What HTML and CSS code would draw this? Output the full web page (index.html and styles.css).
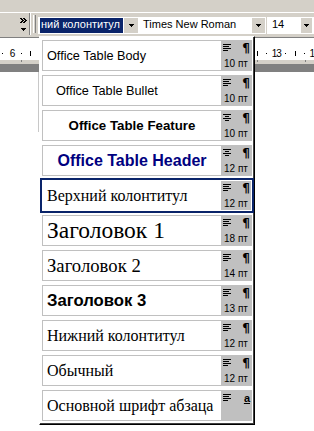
FILE: index.html
```html
<!DOCTYPE html>
<html lang="ru">
<head>
    <meta charset="UTF-8">
    <meta name="viewport" content="width=device-width, initial-scale=1.0">
    <title>Стиль</title>
    <link rel="stylesheet" href="styles.css">
</head>
<body>
    <div class="menubar"></div>

    <div class="toolbar">
        <div class="more">
            <svg class="chev" width="7" height="5" viewBox="0 0 7 5"><path d="M0 0h2v1H0zM3 0h2v1H3zM1 1h2v1H1zM4 1h2v1H4zM2 2h2v1H2zM5 2h2v1H5zM1 3h2v1H1zM4 3h2v1H4zM0 4h2v1H0zM3 4h2v1H3z"/></svg>
            <svg class="arrow" width="5" height="3" viewBox="0 0 5 3"><path d="M0 0h5v1H0zM1 1h3v1H1zM2 2h1v1H2z"/></svg>
        </div>
        <div class="sep"></div>
        <div class="grip"></div>

        <div class="combo combo-style">
            <div class="field selected">ний колонтитул</div>
            <div class="drop"><svg width="5" height="3" viewBox="0 0 5 3"><path d="M0 0h5v1H0zM1 1h3v1H1zM2 2h1v1H2z"/></svg></div>
        </div>
        <div class="combo combo-font">
            <div class="field">Times New Roman</div>
            <div class="drop"><svg width="5" height="3" viewBox="0 0 5 3"><path d="M0 0h5v1H0zM1 1h3v1H1zM2 2h1v1H2z"/></svg></div>
        </div>
        <div class="combo combo-size">
            <div class="field">14</div>
            <div class="drop"><svg width="5" height="3" viewBox="0 0 5 3"><path d="M0 0h5v1H0zM1 1h3v1H1zM2 2h1v1H2z"/></svg></div>
        </div>
    </div>

    <!-- horizontal ruler, 1 cm = 37.8px; numbers under the open list are left out -->
    <div class="ruler">
        <div class="ruler-scale">
            <span class="mk dot"></span>
            <span class="mk num">6</span><span class="mk dot"></span><span class="mk bar"></span><span class="mk dot"></span>
            <span class="mk"></span><span class="mk dot"></span><span class="mk bar"></span><span class="mk dot"></span>
            <span class="mk"></span><span class="mk dot"></span><span class="mk bar"></span><span class="mk dot"></span>
            <span class="mk"></span><span class="mk dot"></span><span class="mk bar"></span><span class="mk dot"></span>
            <span class="mk"></span><span class="mk dot"></span><span class="mk bar"></span><span class="mk dot"></span>
            <span class="mk"></span><span class="mk dot"></span><span class="mk bar"></span><span class="mk dot"></span>
            <span class="mk"></span><span class="mk dot"></span><span class="mk bar"></span><span class="mk dot"></span>
            <span class="mk num">13</span><span class="mk dot"></span><span class="mk bar"></span><span class="mk dot"></span>
            <span class="mk num">14</span>
        </div>
        <div class="ruler-tabs">
            <span></span><span></span><span></span><span></span><span></span><span></span><span></span>
        </div>
        <div class="ruler-edge"></div>
    </div>

    <div class="doc">
        <div class="doc-frame"></div>
    </div>

    <!-- open style list -->
    <div class="style-list">
        <div class="item">
            <div class="name n-body">Office Table Body</div>
            <div class="meta">
                <div class="meta-top"><svg class="align" width="8" height="7" viewBox="0 0 8 7"><path d="M0 0h8v1H0zM0 2h6v1H0zM0 4h8v1H0zM0 6h5v1H0z"/></svg><span class="para">¶</span></div>
                <div class="size">10 пт</div>
            </div>
        </div>
        <div class="item">
            <div class="name n-body n-bullet">Office Table Bullet</div>
            <div class="meta">
                <div class="meta-top"><svg class="align" width="8" height="7" viewBox="0 0 8 7"><path d="M0 0h8v1H0zM0 2h6v1H0zM0 4h8v1H0zM0 6h5v1H0z"/></svg><span class="para">¶</span></div>
                <div class="size">10 пт</div>
            </div>
        </div>
        <div class="item">
            <div class="name n-feature">Office Table Feature</div>
            <div class="meta">
                <div class="meta-top"><svg class="align" width="8" height="7" viewBox="0 0 8 7"><path d="M0 0h8v1H0zM2 2h4v1H2zM0 4h8v1H0zM2 6h4v1H2z"/></svg><span class="para">¶</span></div>
                <div class="size">10 пт</div>
            </div>
        </div>
        <div class="item">
            <div class="name n-header">Office Table Header</div>
            <div class="meta">
                <div class="meta-top"><svg class="align" width="8" height="7" viewBox="0 0 8 7"><path d="M0 0h8v1H0zM2 2h4v1H2zM0 4h8v1H0zM2 6h4v1H2z"/></svg><span class="para">¶</span></div>
                <div class="size">12 пт</div>
            </div>
        </div>
        <div class="item sel">
            <div class="name n-serif">Верхний колонтитул</div>
            <div class="meta">
                <div class="meta-top"><svg class="align" width="8" height="7" viewBox="0 0 8 7"><path d="M0 0h8v1H0zM0 2h6v1H0zM0 4h8v1H0zM0 6h5v1H0z"/></svg><span class="para">¶</span></div>
                <div class="size">12 пт</div>
            </div>
        </div>
        <div class="item">
            <div class="name n-h1">Заголовок 1</div>
            <div class="meta">
                <div class="meta-top"><svg class="align" width="8" height="7" viewBox="0 0 8 7"><path d="M0 0h8v1H0zM0 2h6v1H0zM0 4h8v1H0zM0 6h5v1H0z"/></svg><span class="para">¶</span></div>
                <div class="size">18 пт</div>
            </div>
        </div>
        <div class="item">
            <div class="name n-h2">Заголовок 2</div>
            <div class="meta">
                <div class="meta-top"><svg class="align" width="8" height="7" viewBox="0 0 8 7"><path d="M0 0h8v1H0zM0 2h6v1H0zM0 4h8v1H0zM0 6h5v1H0z"/></svg><span class="para">¶</span></div>
                <div class="size">14 пт</div>
            </div>
        </div>
        <div class="item">
            <div class="name n-h3">Заголовок 3</div>
            <div class="meta">
                <div class="meta-top"><svg class="align" width="8" height="7" viewBox="0 0 8 7"><path d="M0 0h8v1H0zM0 2h6v1H0zM0 4h8v1H0zM0 6h5v1H0z"/></svg><span class="para">¶</span></div>
                <div class="size">13 пт</div>
            </div>
        </div>
        <div class="item">
            <div class="name n-serif">Нижний колонтитул</div>
            <div class="meta">
                <div class="meta-top"><svg class="align" width="8" height="7" viewBox="0 0 8 7"><path d="M0 0h8v1H0zM0 2h6v1H0zM0 4h8v1H0zM0 6h5v1H0z"/></svg><span class="para">¶</span></div>
                <div class="size">12 пт</div>
            </div>
        </div>
        <div class="item">
            <div class="name n-serif">Обычный</div>
            <div class="meta">
                <div class="meta-top"><svg class="align" width="8" height="7" viewBox="0 0 8 7"><path d="M0 0h8v1H0zM0 2h6v1H0zM0 4h8v1H0zM0 6h5v1H0z"/></svg><span class="para">¶</span></div>
                <div class="size">12 пт</div>
            </div>
        </div>
        <div class="item">
            <div class="name n-serif">Основной шрифт абзаца</div>
            <div class="meta">
                <div class="meta-top"><svg class="align" width="8" height="7" viewBox="0 0 8 7"><path d="M0 0h8v1H0zM0 2h6v1H0zM0 4h8v1H0zM0 6h5v1H0z"/></svg><span class="char">a</span></div>
            </div>
        </div>
    </div>
</body>
</html>
```

FILE: styles.css
```css
* {
    box-sizing: border-box;
}
body {
    margin: 0;
    width: 314px;
    height: 431px;
    overflow: hidden;
    position: relative;
    background: #fff;
    color: #000;
    font-family: "Liberation Sans", Arial, sans-serif;
}
svg {
    display: block;
    fill: #000;
    shape-rendering: crispEdges;
}

/* toolbar */
.menubar {
    height: 12px;
    background: #d4d0c8;
}
.toolbar {
    display: flex;
    align-items: flex-start;
    height: 25px;
    background: #d4d0c8;
    border-top: 1px solid #fff;
}
.more {
    width: 29px;
    padding: 5px 0 0 20px;
}
.more .arrow {
    margin: 5px 0 0 1px;
}
.sep {
    width: 2px;
    height: 22px;
    border-left: 1px solid #808080;
    border-right: 1px solid #fff;
}
.grip {
    width: 3px;
    height: 18px;
    margin: 2px 0 0 2px;
    border-left: 1px solid #fff;
    border-right: 1px solid #808080;
}
.combo {
    display: flex;
    height: 17px;
    margin-top: 4px;
    padding: 1px 1px 1px 2px;
    background: #fff;
    font-size: 11px;
}
.combo-style {
    width: 101px;
    margin-left: 2px;
}
.combo-font {
    width: 127px;
}
.combo-size {
    width: 47px;
    margin-left: 1px;
    padding-right: 2px;
}
.field {
    flex: 1;
    min-width: 0;
    height: 15px;
    line-height: 13px;
    padding-left: 2px;
    white-space: nowrap;
    overflow: hidden;
}
.field.selected {
    background: #0a246a;
    color: #fff;
    margin-right: 1px;
    padding-left: 1px;
}
.combo-size .field {
    padding-left: 3px;
}
.drop {
    display: flex;
    align-items: center;
    justify-content: center;
    width: 13px;
    height: 15px;
    background: #d4d0c8;
}
.combo-style .drop {
    width: 14px;
}
.combo-size .drop {
    width: 11px;
}

/* ruler */
.ruler {
    border-top: 1px solid #808080;
}
.ruler-scale {
    display: flex;
    height: 22px;
    margin-left: -2.2px;
    font-size: 10px;
    letter-spacing: -1px;
}
.mk {
    flex: none;
    display: flex;
    align-items: center;
    justify-content: center;
    width: 9.45px;
    padding-top: 9px;
    line-height: 10px;
}
.dot::before {
    content: "";
    width: 1px;
    height: 1px;
    background: #000;
}
.bar::before {
    content: "";
    width: 1px;
    height: 5px;
    background: #000;
}
.ruler-tabs {
    display: flex;
    height: 4px;
    padding-left: 21px;
    background: #d4d0c8;
}
.ruler-tabs span {
    flex: none;
    width: 47.25px;
    height: 2px;
    border-left: 1px solid #808080;
}
.ruler-edge {
    height: 8px;
    background: #808080;
}
.doc-frame {
    width: 1px;
    height: 60px;
    margin-left: 38px;
    background: #c8c8c8;
}

/* style list */
.style-list {
    position: absolute;
    left: 39px;
    top: 36px;
    width: 216px;
    display: flex;
    flex-direction: column;
    gap: 4px;
    padding: 3px 2px;
    background: #fff;
    border: 1px solid;
    border-color: #fff #000 #000 #fff;
    box-shadow: inset -1px -1px 0 #404040;
}
.item {
    display: flex;
    height: 31px;
    border: 1px solid #c0c0c0;
    background: #fff;
}
.item.sel {
    border-color: transparent;
    outline: 2px solid #0a246a;
}
.name {
    flex: 1;
    min-width: 0;
    display: flex;
    align-items: center;
    padding-left: 4px;
    white-space: nowrap;
    overflow: hidden;
}
.n-body {
    font-size: 12.7px;
}
.n-bullet {
    padding-left: 13px;
}
.n-feature {
    justify-content: center;
    padding-left: 0;
    font-size: 13.3px;
    font-weight: bold;
}
.n-header {
    justify-content: center;
    padding-left: 0;
    font-size: 16px;
    font-weight: bold;
    color: #000080;
}
.n-serif,
.n-h1,
.n-h2 {
    font-family: "Liberation Serif", "Times New Roman", serif;
    font-size: 16px;
}
.n-h1 {
    font-size: 23.5px;
}
.n-h2 {
    font-size: 18.7px;
}
.n-h3 {
    font-size: 16.7px;
    font-weight: bold;
}
.meta {
    flex: none;
    width: 30px;
    padding: 3px 1px 0 2px;
    background: #c0c0c0;
}
.meta-top {
    display: flex;
    justify-content: space-between;
    align-items: flex-start;
    height: 10px;
}
.para {
    font-family: "DejaVu Sans", sans-serif;
    font-size: 12px;
    font-weight: bold;
    line-height: 9px;
    color: #000;
}
.char {
    font-size: 11px;
    font-weight: bold;
    line-height: 9px;
    text-decoration: underline;
}
.size {
    margin: 5px 0 0 1px;
    font-size: 10px;
    line-height: 10px;
}
```
